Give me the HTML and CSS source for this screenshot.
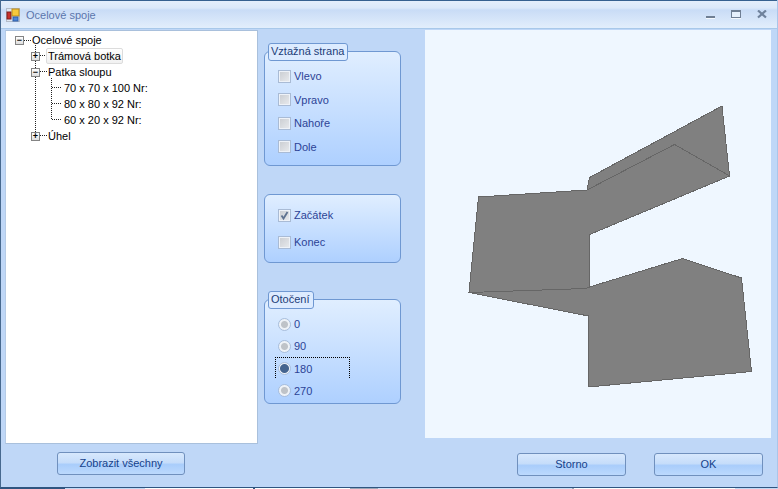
FILE: index.html
```html
<!DOCTYPE html>
<html lang="cs">
<head>
<meta charset="utf-8">
<title>Ocelové spoje</title>
<link rel="stylesheet" href="styles.css">
</head>
<body>
<div class="window">
  <header class="titlebar">
    <svg class="app-icon" width="14" height="14" viewBox="0 0 14 14">
      <rect x="0.5" y="0.5" width="13" height="13" fill="#dfe7f2" stroke="#b4bcc8"/>
      <rect x="1" y="4" width="4" height="7" fill="#c8302a" stroke="#7c1d1a"/>
      <rect x="6" y="1" width="7" height="7" fill="#f6c83c" stroke="#b98a1a"/>
      <rect x="7" y="9" width="5" height="4" fill="#4d86d8" stroke="#2f5ea8"/>
    </svg>
    <span class="title-text">Ocelové spoje</span>
    <div class="controls">
      <svg width="9" height="4" viewBox="0 0 9 4"><rect y="0" width="9" height="2" fill="#6f7f94"/><rect y="2" width="9" height="1" fill="#f4f8fd"/></svg>
      <svg width="10" height="9" viewBox="0 0 10 9"><rect x="0.5" y="0.5" width="9" height="7" fill="#e6f0fc" stroke="#6f7f94"/><rect x="0" y="0" width="10" height="2" fill="#6f7f94"/><rect y="8" width="10" height="1" fill="#f4f8fd"/></svg>
      <svg width="10" height="9" viewBox="0 0 10 9"><path d="M1 0.5 L9 7.5 M9 0.5 L1 7.5" stroke="#6f829c" stroke-width="2.2" fill="none"/></svg>
    </div>
  </header>

  <main class="content">
    <div class="tree">
      <svg class="tree-guides" width="80" height="120" viewBox="0 0 80 120">
        <path d="M18 9.5H25M29.5 14V104M34 24.5H41M34 40.5H41M34 104.5H41M45.5 47V88.5M46 56.5H56M46 72.5H56M46 88.5H56" stroke="#222" stroke-dasharray="1 1" fill="none"/>
      </svg>
      <div class="node level-0"><span class="exp">−</span><span class="label">Ocelové spoje</span></div>
      <div class="node level-1"><span class="exp">+</span><span class="label selected">Trámová botka</span></div>
      <div class="node level-1"><span class="exp">−</span><span class="label">Patka sloupu</span></div>
      <div class="node level-2"><span class="label">70 x 70 x 100 Nr:</span></div>
      <div class="node level-2"><span class="label">80 x 80 x 92 Nr:</span></div>
      <div class="node level-2"><span class="label">60 x 20 x 92 Nr:</span></div>
      <div class="node level-1"><span class="exp">+</span><span class="label">Úhel</span></div>
    </div>

    <div class="options">
      <section class="group group-side">
        <span class="legend">Vztažná strana</span>
        <div class="opt"><span class="check"></span>Vlevo</div>
        <div class="opt"><span class="check"></span>Vpravo</div>
        <div class="opt"><span class="check"></span>Nahoře</div>
        <div class="opt"><span class="check"></span>Dole</div>
      </section>
      <section class="group group-end">
        <div class="opt"><span class="check"><svg width="11" height="11" viewBox="0 0 11 11"><path d="M2.5 5.5 L4.5 8.5 L8.5 2" stroke="#5f7290" stroke-width="1.8" fill="none"/></svg></span>Začátek</div>
        <div class="opt"><span class="check"></span>Konec</div>
      </section>
      <section class="group group-rot">
        <span class="legend">Otočení</span>
        <div class="opt"><span class="radio"></span>0</div>
        <div class="opt"><span class="radio"></span>90</div>
        <div class="opt focused"><span class="radio on"></span>180</div>
        <div class="opt"><span class="radio"></span>270</div>
      </section>
    </div>

    <div class="preview">
      <svg class="model" width="346" height="408" viewBox="425 30 346 408">
        <polygon points="722,106 729.5,176 589.5,234.5 589.5,287 682.5,258.5 741.5,278 751.5,371.5 588.5,387 588.5,316 469,292.5 478.5,197 587,190 589.5,177.5" fill="#808080" stroke="#666" stroke-width="1"/>
        <path d="M587 190 L674.5 144.5 L729 175.5 M469 292.5 L586 288.5 L589.5 287" fill="none" stroke="#666" stroke-width="1"/>
      </svg>
    </div>
  </main>

  <footer class="footer">
    <button class="btn btn-all" type="button">Zobrazit všechny</button>
    <div class="footer-right">
      <button class="btn btn-dialog" type="button">Storno</button>
      <button class="btn btn-dialog" type="button">OK</button>
    </div>
  </footer>
</div>
<div class="desktop"></div>
</body>
</html>
```

FILE: styles.css
```css
* { box-sizing: border-box; }
html, body {
  margin: 0;
  width: 778px;
  height: 489px;
  overflow: hidden;
  background: #c6dcf7;
  font-family: "Liberation Sans", Arial, sans-serif;
  font-size: 11px;
}
.window {
  height: 488px;
  display: flex;
  flex-direction: column;
  background: #bfd7f7;
  border-left: 1px solid #47698f;
  border-bottom: 1px solid #2f5580;
  border-right: 1px solid #a9c6ea;
}
.titlebar {
  height: 29px;
  flex: none;
  display: flex;
  align-items: center;
  padding: 1px 0 0 5px;
  border-top: 1px solid #36608f;
  border-bottom: 1px solid #a8c8ea;
  background: linear-gradient(#e4eefb 0, #dbe8f9 7px, #c9dcf6 9px, #e2eefc 100%);
}
.app-icon { flex: none; margin-right: 6px; }
.title-text { color: #5b76ad; }
.controls {
  margin-left: auto;
  display: flex;
  align-items: center;
  gap: 16px;
  padding-right: 10px;
  margin-top: -1px;
}
.controls svg:first-child { margin-top: 7px; }
.content {
  flex: none;
  display: flex;
  align-items: flex-start;
  padding: 1px 6px 0 4px;
}
.tree {
  position: relative;
  width: 253px;
  height: 414px;
  flex: none;
  padding-top: 1px;
  background: #fff;
  border: 1px solid #a9c0dc;
  border-left-color: #b5cbe6;
  color: #000;
}
.tree-guides { position: absolute; left: 0; top: 0; }
.node {
  position: relative;
  height: 16px;
  display: flex;
  align-items: center;
  line-height: 16px;
  white-space: nowrap;
}
.level-0 { padding-left: 9px; }
.level-1 { padding-left: 25px; }
.level-2 { padding-left: 58px; }
.exp {
  width: 9px;
  height: 9px;
  flex: none;
  margin-right: 8px;
  border: 1px solid #848484;
  background: linear-gradient(#fff, #dfdfdf);
  font-size: 9px;
  line-height: 6px;
  text-align: center;
  font-weight: 700;
  overflow: hidden;
  color: #000;
}
.selected {
  margin-left: -2px;
  padding: 0 1px;
  height: 16px;
  border: 1px solid #dcdcdc;
  border-radius: 2px;
  line-height: 14px;
  background: linear-gradient(#ffffff, #f1f1f1);
}
.options {
  width: 137px;
  flex: none;
  margin-left: 6px;
  margin-right: 24px;
}
.group {
  position: relative;
  display: flex;
  flex-direction: column;
  border: 1px solid #6f98d2;
  border-radius: 6px;
  background: linear-gradient(#e0eeff, #aed0ff);
  padding-left: 13px;
}
.group-side { margin-top: 21px; height: 115px; padding-top: 16px; gap: 7.5px; }
.group-end { margin-top: 28px; height: 69px; padding-top: 12px; gap: 11px; }
.group-rot { margin-top: 36px; height: 105px; padding-top: 16px; gap: 6.33px; }
.legend {
  position: absolute;
  left: 3px;
  top: -9px;
  height: 18px;
  padding: 0 3px 0 2px;
  line-height: 15px;
  border: 1px solid #6f98d2;
  border-radius: 3px;
  background: #dcebff;
  color: #1d3d78;
}
.opt {
  position: relative;
  height: 16px;
  display: flex;
  align-items: center;
  line-height: 16px;
  color: #2c4396;
}
.check {
  width: 13px;
  height: 13px;
  flex: none;
  margin-right: 3px;
  display: flex;
  align-items: center;
  justify-content: center;
  border: 1px solid #a9bbd5;
  background: linear-gradient(135deg, #c9ccd1, #e9ebee);
  box-shadow: inset 0 0 0 1px #eef2f8;
}
.radio {
  width: 13px;
  height: 13px;
  flex: none;
  margin-right: 3px;
  border-radius: 50%;
  border: 1px solid #a9bedb;
  background: radial-gradient(circle, #bfc3c8 0 3px, #eef2f7 4px);
}
.radio.on { background: radial-gradient(circle, #44648f 0 4px, #eef2f7 5px); }
.focused::before {
  content: "";
  position: absolute;
  left: -3px;
  top: -4px;
  width: 73px;
  height: 20px;
  border: 1px dotted #000;
  border-bottom: 0;
}
.preview {
  width: 346px;
  height: 408px;
  flex: none;
  background: #eff7ff;
}
.model { display: block; shape-rendering: crispEdges; }
.footer {
  flex: 1;
  display: flex;
  align-items: flex-start;
  padding: 8px 14px 0 56px;
}
.footer-right {
  margin-left: auto;
  margin-top: 1px;
  display: flex;
  gap: 28px;
}
.btn {
  height: 23px;
  padding: 0;
  border: 1px solid #7090bd;
  border-radius: 3px;
  background: linear-gradient(#d7e8fd 0, #c6ddfa 45%, #a9cdfb 55%, #bcd9fd 100%);
  color: #15428b;
  font-family: "Liberation Sans", Arial, sans-serif;
  font-size: 11px;
  line-height: 19px;
}
.btn-all { width: 128px; }
.btn-dialog { width: 109px; }
.desktop {
  height: 1px;
  background: linear-gradient(90deg, #2f5580 0 65px, #c3d9f5 65px 145px, #fff 145px 253px, #2f5580 253px 255px, #fff 255px 350px, #9aa7b8 350px 378px, #cfe0f5 378px 572px, #9aa7b8 572px 574px, #fff 574px 735px, #c3d9f5 735px);
}
```
